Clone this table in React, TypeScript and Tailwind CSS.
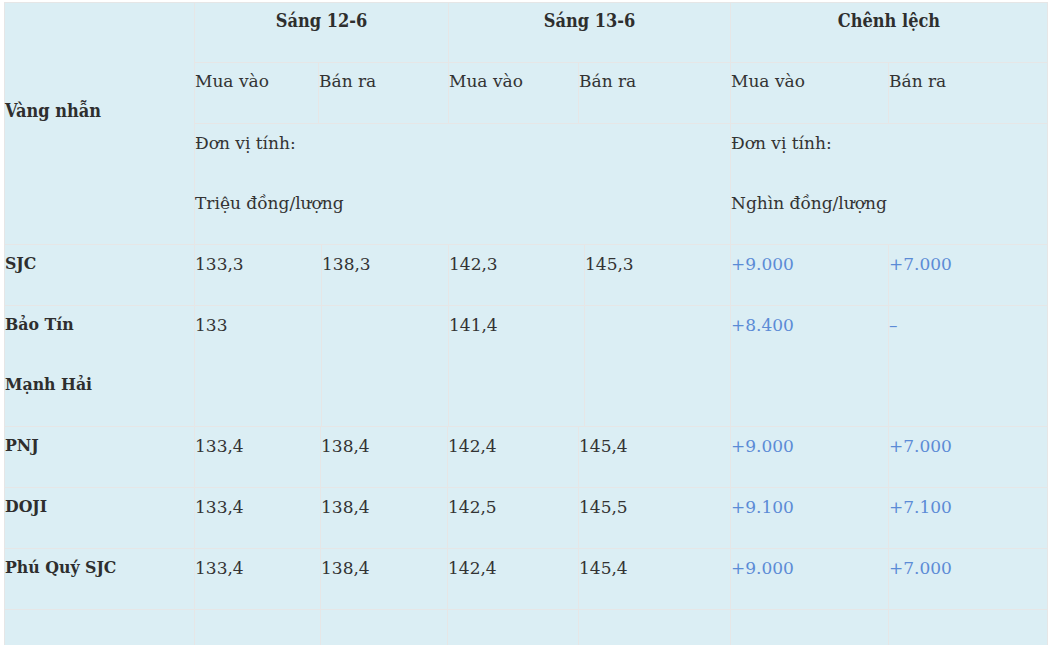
import React from "react";

const font = { fontFamily: '"DejaVu Serif", "Liberation Serif", serif' };

type Row = {
  name: string[];
  values: string[];
  diff: string[];
  cols: string[];
};

const rowsA = ["w-[127px]", "w-[127px]", "w-[136px]", "w-[146px]", "w-[158px]", "w-[159px]"];
const rowsB = ["w-[126px]", "w-[127px]", "w-[131px]", "w-[152px]", "w-[158px]", "w-[159px]"];

const rows: Row[] = [
  { name: ["SJC"], values: ["133,3", "138,3", "142,3", "145,3"], diff: ["+9.000", "+7.000"], cols: rowsA },
  { name: ["Bảo Tín", "Mạnh Hải"], values: ["133", "", "141,4", ""], diff: ["+8.400", "–"], cols: rowsA },
  { name: ["PNJ"], values: ["133,4", "138,4", "142,4", "145,4"], diff: ["+9.000", "+7.000"], cols: rowsB },
  { name: ["DOJI"], values: ["133,4", "138,4", "142,5", "145,5"], diff: ["+9.100", "+7.100"], cols: rowsB },
  { name: ["Phú Quý SJC"], values: ["133,4", "138,4", "142,4", "145,4"], diff: ["+9.000", "+7.000"], cols: rowsB },
];

const Line = ({ children, bold }: { children?: React.ReactNode; bold?: boolean }) => (
  <p
    className={
      bold
        ? "h-[60px] pt-[5px] text-[17.5px] leading-[27px] font-bold font-stretch-condensed text-[#2e2e2e]"
        : "h-[60px] pt-[6px] text-[17px] leading-[27px] text-[#333333]"
    }
  >
    {children}
  </p>
);

export default function App() {
  return (
    <div className="min-h-screen bg-white pl-[4px] pt-[2px]" style={font}>
      <div className="w-[1044px] border-l border-t border-[#e6e6e6] bg-[#dbeef4]">
        {/* header */}
        <div className="flex">
          <div className="w-[190px] border-r border-b border-[#e6e6e6] pt-[89px] h-[242px]">
            <p className="pt-[5px] text-[18px] leading-[27px] font-bold font-stretch-condensed text-[#2e2e2e]">
              Vàng nhẫn
            </p>
          </div>
          <div className="flex w-[853px] flex-col">
            <div className="flex">
              {[
                ["w-[254px]", "Sáng 12-6"],
                ["w-[282px]", "Sáng 13-6"],
                ["w-[317px]", "Chênh lệch"],
              ].map(([w, t]) => (
                <div key={t} className={`${w} h-[60px] border-r border-b border-[#e6e6e6] text-center`}>
                  <p className="pt-[4px] text-[18px] leading-[27px] font-bold font-stretch-condensed text-[#2e2e2e]">
                    {t}
                  </p>
                </div>
              ))}
            </div>
            <div className="flex">
              {[
                ["w-[124px]", "Mua vào"],
                ["w-[130px]", "Bán ra"],
                ["w-[130px]", "Mua vào"],
                ["w-[152px]", "Bán ra"],
                ["w-[158px]", "Mua vào"],
                ["w-[159px]", "Bán ra"],
              ].map(([w, t], i) => (
                <div key={i} className={`${w} h-[61px] border-r border-b border-[#e6e6e6]`}>
                  <p className="pt-[5px] text-[17px] leading-[27px] text-[#333333]">{t}</p>
                </div>
              ))}
            </div>
            <div className="flex">
              <div className="w-[536px] h-[121px] border-r border-b border-[#e6e6e6]">
                <Line>Đơn vị tính:</Line>
                <Line>Triệu đồng/lượng</Line>
              </div>
              <div className="w-[317px] h-[121px] border-r border-b border-[#e6e6e6]">
                <Line>Đơn vị tính:</Line>
                <Line>Nghìn đồng/lượng</Line>
              </div>
            </div>
          </div>
        </div>

        {/* data rows */}
        {rows.map((r) => (
          <div key={r.name.join()} className="flex">
            <div className="w-[190px] border-r border-b border-[#e6e6e6]">
              {r.name.map((n) => (
                <Line bold key={n}>
                  {n}
                </Line>
              ))}
            </div>
            {r.values.map((v, i) => (
              <div key={i} className={`${r.cols[i]} border-r border-b border-[#e6e6e6]`}>
                <Line>{v}</Line>
              </div>
            ))}
            {r.diff.map((d, i) => (
              <div key={d + i} className={`${r.cols[4 + i]} border-r border-b border-[#e6e6e6]`}>
                <p className="h-[60px] pt-[6px] text-[17px] leading-[27px] text-[#5b8bd6]">{d}</p>
              </div>
            ))}
          </div>
        ))}
        <div className="flex h-[61px]">
          {["w-[190px]", ...rowsB].map((w, i) => (
            <div key={i} className={`${w} border-r border-b border-[#e6e6e6]`} />
          ))}
        </div>
      </div>
    </div>
  );
}
